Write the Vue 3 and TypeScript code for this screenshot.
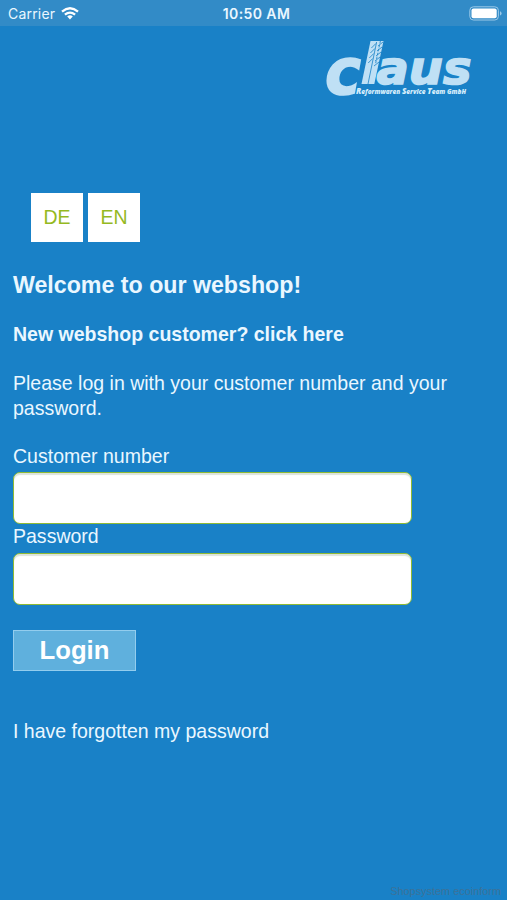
<script setup lang="ts">
import { ref } from 'vue'

const languages: string[] = ['DE', 'EN']
const customer = ref('')
const password = ref('')
</script>

<template>
  <div class="screen">
    <header class="status">
      <div class="carrier">
        <span>Carrier</span>
        <svg class="wifi" width="18" height="13" viewBox="0 0 18 13" fill="none" stroke="#fff" stroke-width="2.3">
          <path d="M1 4.6Q9-2.2 17 4.6" />
          <path d="M3.9 7.7Q9 3.5 14.1 7.7" />
          <path d="M6.2 9.4Q9 7.2 11.8 9.4L9 12.6Z" fill="#fff" stroke="none" />
        </svg>
      </div>
      <span class="time">10:50 AM</span>
      <svg class="battery" width="34" height="15" viewBox="0 0 34 15">
        <rect x="0.8" y="0.8" width="28.6" height="13.2" rx="3.6" fill="none" stroke="#9bc9e8" stroke-width="1" />
        <rect x="2.5" y="2.5" width="25.2" height="9.8" rx="2" fill="#fff" />
        <path d="M31 5.2Q32.6 5.8 32.6 7.4T31 9.6Z" fill="#9bc9e8" />
      </svg>
    </header>

    <div class="brand">
      <svg width="150" height="60" viewBox="0 0 150 60" role="img" aria-label="claus">
        <g class="wordmark">
          <text x="0" y="54.5" font-size="64" textLength="36" lengthAdjust="spacingAndGlyphs">c</text>
          <text x="51.5" y="44.5" font-size="47" textLength="95" lengthAdjust="spacingAndGlyphs">aus</text>
        </g>
        <path d="M45.5 2H58.5L49.3 45H36.5Z" fill="#bfe0f5" />
        <g stroke="#1981c7" fill="none" stroke-width="0.8">
          <path d="M51.6 3L43 45" />
          <path d="M55.4 2L50.5 25" stroke-dasharray="2.6 1.4" />
          <path d="M46.4 9L50.9 4.5M45.4 14L49.9 9.5M44.3 19L48.8 14.5M43.2 24L47.7 19.5M53 7L58 3M52 12L57 8M51 17L56 13M50 22L55 18M49 27L54 23" />
        </g>
        <text class="tagline" x="31" y="54.5" textLength="110" lengthAdjust="spacingAndGlyphs"><tspan class="cap">R</tspan>eformwaren <tspan class="cap">S</tspan>ervice <tspan class="cap">T</tspan>eam GmbH</text>
      </svg>
    </div>

    <nav class="languages">
      <a v-for="lang in languages" :key="lang">{{ lang }}</a>
    </nav>

    <main>
      <h1>Welcome to our webshop!</h1>
      <p class="register">New webshop customer? click here</p>
      <p class="intro">Please log in with your customer number and your password.</p>
      <form @submit.prevent>
        <label for="customer">Customer number</label>
        <input id="customer" v-model="customer" type="text" />
        <label for="password">Password</label>
        <input id="password" v-model="password" type="password" />
        <button type="submit">Login</button>
      </form>
      <a class="forgot">I have forgotten my password</a>
    </main>

    <footer>Shopsystem ecoinform</footer>
  </div>
</template>

<style>
body {
  background: #1981c7;
}
</style>

<style scoped>
.screen {
  box-sizing: border-box;
  height: 900px;
  display: flex;
  flex-direction: column;
  overflow: hidden;
  background: #1981c7;
  color: #eaf7ff;
  font-family: "Liberation Sans", Arial, sans-serif;
  font-size: 19.53px;
  line-height: 24.5px;
}
.status {
  height: 26px;
  flex: none;
  display: grid;
  grid-template-columns: 1fr auto 1fr;
  align-items: center;
  box-sizing: border-box;
  padding: 1px 4px 0 8px;
  background: #328bc7;
  font-family: Inter, sans-serif;
  font-size: 14px;
  line-height: 24px;
}
.carrier {
  display: flex;
  align-items: center;
  gap: 6px;
  letter-spacing: 0.2px;
}
.time {
  padding-left: 2px;
  font-weight: 600;
  letter-spacing: 0.4px;
}
.battery {
  justify-self: end;
}
.brand {
  display: flex;
  justify-content: flex-end;
  padding: 13px 32px 0 0;
  height: 60px;
}
.brand svg {
  overflow: visible;
}
.wordmark {
  fill: #bfe0f5;
  stroke: #bfe0f5;
  stroke-width: 1.6;
  font-family: "DejaVu Sans", sans-serif;
  font-weight: 700;
  font-style: italic;
}
.tagline {
  fill: #d5edfb;
  font-family: "Open Sans", sans-serif;
  font-size: 7.5px;
  font-weight: 800;
  font-style: italic;
}
.cap {
  font-size: 9.5px;
}
.languages {
  display: flex;
  gap: 5px;
  padding: 94px 0 0 31px;
}
.languages a {
  width: 52px;
  height: 49px;
  background: #fff;
  color: #95b91f;
  line-height: 48px;
  text-align: center;
}
main {
  padding: 31px 13px 0;
}
h1 {
  margin: 0;
  font-size: 23.2px;
  line-height: 25px;
}
p {
  margin: 0;
}
.register {
  margin-top: 24px;
  font-weight: 700;
}
.intro {
  margin-top: 24.5px;
}
form {
  display: flex;
  flex-direction: column;
  align-items: flex-start;
  padding-top: 24px;
}
label {
  height: 28px;
}
label + input + label {
  height: 29px;
}
input {
  box-sizing: border-box;
  width: 399px;
  height: 52px;
  padding: 0 10px;
  border: 1px solid #8fba35;
  border-radius: 7px;
  background: #fff;
  box-shadow: inset 0 2px 1px #dce3dc;
  font: inherit;
}
button {
  width: 123px;
  height: 41px;
  margin-top: 25px;
  padding: 0;
  border: 1px solid #93cdee;
  background: #5fb0dd;
  color: #fff;
  font: 700 25.7px "Liberation Sans", Arial, sans-serif;
}
.forgot {
  display: block;
  margin-top: 48px;
}
footer {
  margin-top: auto;
  padding: 0 6px 3px 0;
  color: #3c7298;
  font-size: 10.9px;
  line-height: 12px;
  text-align: right;
}
</style>
